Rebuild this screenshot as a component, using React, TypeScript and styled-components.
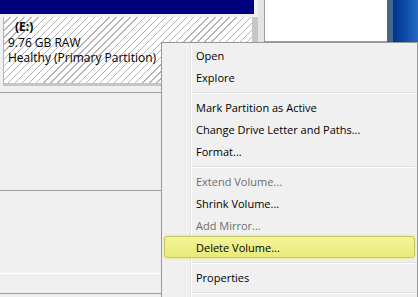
import React from 'react';
import styled, { createGlobalStyle } from 'styled-components';

const GlobalStyle = createGlobalStyle`
  html, body {
    margin: 0;
    padding: 0;
    background: #f0f0f0;
  }
  body {
    font-family: "Open Sans", "Noto Sans", "Liberation Sans", sans-serif;
  }
`;

// 整个画面
const Screen = styled.div`
  position: relative;
  width: 418px;
  height: 297px;
  overflow: hidden;
  background: #f0f0f0;
  display: flex;
  flex-direction: column;
`;

const TopRow = styled.div`
  display: flex;
  align-items: flex-start;
  height: 93px;
  border-bottom: 1px solid #a0a0a0;
  box-sizing: border-box;
`;

const DiskColumn = styled.div`
  width: 258px;
  display: flex;
  flex-direction: column;
`;

const VolumeHeader = styled.div`
  height: 14px;
  margin-right: 4px;
  background: #00007f;
`;

const VolumeBox = styled.div`
  margin: 3px 0 0 3px;
  height: 64px;
  padding: 2px 0 0 4px;
  border-left: 1px solid #b4b4b4;
  border-right: 6px solid #c6c6c6;
  border-bottom: 3px solid #c6c6c6;
  background: repeating-linear-gradient(
    135deg,
    #ffffff 0px,
    #ffffff 4px,
    #b4b4b4 4px,
    #b4b4b4 5px
  );
  font-size: 12px;
  line-height: 15.5px;
  color: #000;
`;

const VolumeLine = styled.div<{ $bold?: boolean }>`
  font-weight: ${(p) => (p.$bold ? 700 : 400)};
  padding-left: ${(p) => (p.$bold ? '7px' : '0')};
  white-space: nowrap;
`;

const Splitter = styled.div`
  width: 6px;
  height: 42px;
  background: #e4e4e4;
  border-right: 1px solid #9c9c9c;
`;

const WhitePanel = styled.div`
  width: 122px;
  height: 42px;
  box-sizing: border-box;
  background: #ffffff;
  border-bottom: 1px solid #a0a0a0;
`;

const DesktopStrip = styled.div`
  flex: 1;
  height: 42px;
  box-sizing: border-box;
  border-left: 6px solid #43678f;
  background: linear-gradient(90deg, #02348a 0%, #0a4aa8 45%, #2469c4 100%);
`;

const PaneSection = styled.div<{ $height: number; $line: string }>`
  height: ${(p) => p.$height}px;
  box-sizing: border-box;
  border-bottom: 1px solid ${(p) => p.$line};
`;

// 右键菜单
const Menu = styled.div`
  position: absolute;
  left: 161px;
  top: 42px;
  width: 257px;
  height: 270px;
  box-sizing: border-box;
  padding: 1px 2px 2px;
  border: 1px solid #979797;
  background: #f0f0f0;
  box-shadow: 2px 2px 3px rgba(0, 0, 0, 0.25);
  font-size: 11px;
  color: #000;

  &::before {
    content: '';
    position: absolute;
    left: 28px;
    top: 2px;
    bottom: 0;
    width: 1px;
    background: #e2e3e3;
    border-right: 1px solid #ffffff;
  }
`;

const MenuItem = styled.div<{ $disabled?: boolean; $hot?: boolean }>`
  position: relative;
  height: 22px;
  box-sizing: border-box;
  display: flex;
  align-items: center;
  padding-left: 32px;
  white-space: nowrap;
  color: ${(p) => (p.$disabled ? '#6d6d6d' : '#000')};
  ${(p) =>
    p.$hot &&
    `
    padding-left: 31px;
    border: 1px solid #c4c766;
    border-radius: 3px;
    background: linear-gradient(#f3f49a, #e8ea78);
    box-shadow: 0 0 2px 1px rgba(232, 236, 130, 0.7);
  `}
`;

const Separator = styled.div`
  height: 8px;
  box-sizing: border-box;
  padding-top: 4px;
  margin-left: 28px;

  &::after {
    content: '';
    display: block;
    height: 1px;
    background: #e0e0e0;
    border-bottom: 1px solid #ffffff;
  }
`;

type Entry = { label: string; disabled?: boolean; hot?: boolean } | 'sep';

const entries: Entry[] = [
  { label: 'Open' },
  { label: 'Explore' },
  'sep',
  { label: 'Mark Partition as Active' },
  { label: 'Change Drive Letter and Paths...' },
  { label: 'Format...' },
  'sep',
  { label: 'Extend Volume...', disabled: true },
  { label: 'Shrink Volume...' },
  { label: 'Add Mirror...', disabled: true },
  { label: 'Delete Volume...', hot: true },
  'sep',
  { label: 'Properties' },
  'sep',
];

export default function App() {
  return (
    <>
      <GlobalStyle />
      <Screen>
        <TopRow>
          <DiskColumn>
            <VolumeHeader />
            <VolumeBox>
              <VolumeLine $bold>(E:)</VolumeLine>
              <VolumeLine>9.76 GB RAW</VolumeLine>
              <VolumeLine>Healthy (Primary Partition)</VolumeLine>
            </VolumeBox>
          </DiskColumn>
          <Splitter />
          <WhitePanel />
          <DesktopStrip />
        </TopRow>
        <PaneSection $height={98} $line="#a0a0a0" />
        <PaneSection $height={83} $line="#ffffff" />
        <PaneSection $height={20} $line="#a0a0a0" />

        <Menu>
          {entries.map((e, i) =>
            e === 'sep' ? (
              <Separator key={i} />
            ) : (
              <MenuItem key={i} $disabled={e.disabled} $hot={e.hot}>
                {e.label}
              </MenuItem>
            )
          )}
        </Menu>
      </Screen>
    </>
  );
}
